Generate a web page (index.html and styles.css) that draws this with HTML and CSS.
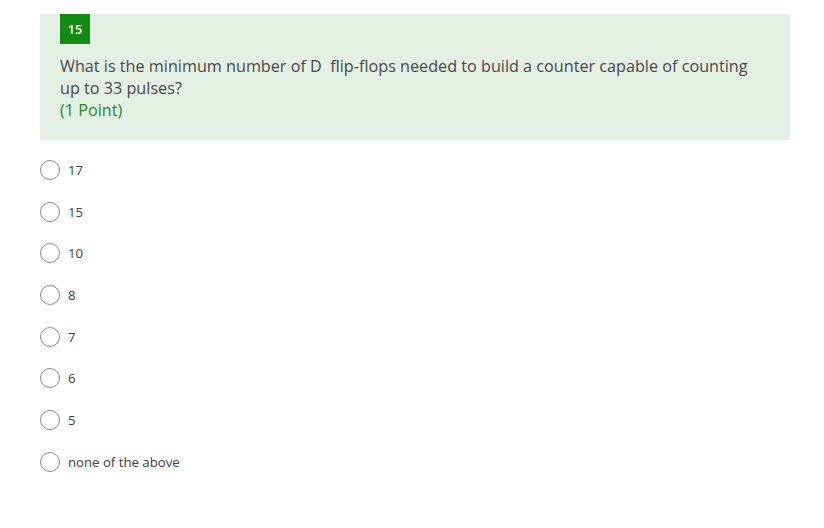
FILE: index.html
```html
<!DOCTYPE html>
<html>
<head>
<meta charset="utf-8">
<link rel="stylesheet" href="styles.css">
</head>
<body>
<div class="page">
  <div class="card">
    <div class="badge">15</div>
    <div class="question">What is the minimum number of D&nbsp; flip-flops needed to build a counter capable of counting up to 33 pulses?</div>
    <div class="points">(1 Point)</div>
  </div>
  <div class="options">
    <label class="option"><span class="radio"></span><span class="label">17</span></label>
    <label class="option"><span class="radio"></span><span class="label">15</span></label>
    <label class="option"><span class="radio"></span><span class="label">10</span></label>
    <label class="option"><span class="radio"></span><span class="label">8</span></label>
    <label class="option"><span class="radio"></span><span class="label">7</span></label>
    <label class="option"><span class="radio"></span><span class="label">6</span></label>
    <label class="option"><span class="radio"></span><span class="label">5</span></label>
    <label class="option"><span class="radio"></span><span class="label">none of the above</span></label>
  </div>
</div>
</body>
</html>
```
FILE: styles.css
```css
html, body {
  margin: 0;
  padding: 0;
  background: #ffffff;
}
body {
  font-family: "Open Sans", "Noto Sans", sans-serif;
  color: #333333;
}
.page {
  padding: 14px 34px 0 40px;
}
.card {
  background: #e5f0e5;
  padding: 0 20px 19px 20px;
  display: flex;
  flex-direction: column;
}
.badge {
  width: 30px;
  height: 30px;
  background: #138a13;
  color: #ffffff;
  font-size: 12.5px;
  font-weight: 600;
  display: flex;
  align-items: center;
  justify-content: center;
}
.question {
  margin-top: 11px;
  font-size: 16.2px;
  line-height: 22px;
  color: #484848;
  padding-right: 20px;
}
.points {
  font-size: 16.2px;
  line-height: 22px;
  color: #1f871f;
}
.options {
  display: flex;
  flex-direction: column;
  padding-top: 9px;
}
.option {
  height: 41.7px;
  display: flex;
  align-items: center;
  gap: 8px;
}
.radio {
  width: 20px;
  height: 20px;
  border: 1px solid #8a8a8a;
  border-radius: 50%;
  box-sizing: border-box;
  flex: none;
}
.label {
  font-size: 13.2px;
  color: #404040;
}
```
